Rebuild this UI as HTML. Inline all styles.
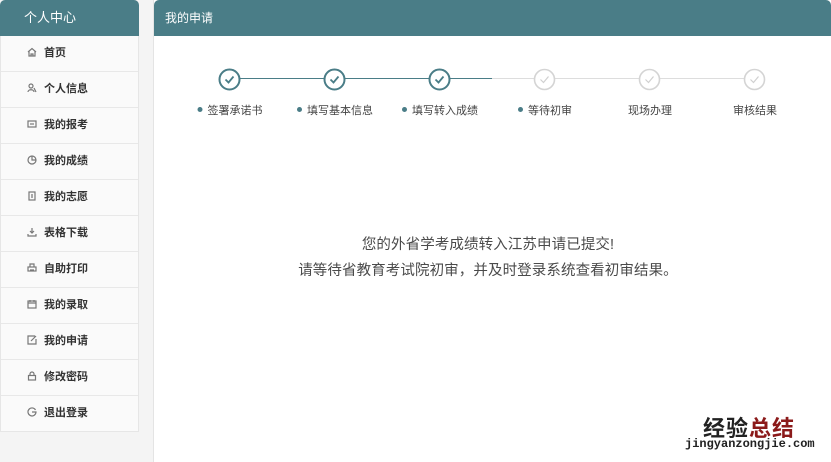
<!DOCTYPE html>
<html><head><meta charset="utf-8"><style>
*{margin:0;padding:0;box-sizing:border-box}
body{width:831px;height:462px;background:#f4f4f4;font-family:"Liberation Sans","Noto Sans CJK SC",sans-serif;position:relative;overflow:hidden}
.side{position:absolute;left:0;top:0;width:139px;height:432px;background:#fafafa;border:1px solid #e6e6e6;border-top:none;border-radius:6px 6px 0 0}
.hd{height:36px;background:#4a7d87;color:#fff;font-size:13px;line-height:36px;border-radius:5px 5px 0 0}
.side .hd{padding-left:24px;margin:0 -1px}
.it{height:36px;border-bottom:1px solid #e8e8e8;font-size:11px;color:#333;line-height:35px;padding-left:26px;font-weight:bold}
.it svg{width:10px;height:10px;vertical-align:-1px;margin-right:7px;fill:none;stroke:#777;stroke-width:1.2}
.main{position:absolute;left:153px;top:0;width:678px;height:462px;background:#fff;border-left:1px solid #e4e4e4}
.main .hd{padding-left:11px;font-size:12px}
.c{position:absolute;top:68px;width:23px;height:23px}
.ln{position:absolute;top:78px;height:1px}
.lb{position:absolute;top:102px;font-size:11px;color:#444;white-space:nowrap;transform:translateX(-50%)}
.lb i{display:inline-block;width:5px;height:5px;border-radius:50%;background:#4a7d87;margin-right:5px;vertical-align:2px}
.msg{position:absolute;left:0;width:678px;text-align:center;font-size:14.5px;color:#4a4a4a;letter-spacing:0.1px}
</style></head><body>
<div class="side"><div class="hd">个人中心</div>
<div class="it"><svg viewBox="0 0 10 10"><path d="M1 5L5 1.5 9 5M2 4.5V9H8V4.5M4 9V7H6V9"/></svg>首页</div>
<div class="it"><svg viewBox="0 0 10 10"><circle cx="4" cy="3" r="2"/><path d="M1 9C1 6 7 6 7 9M7 5L9 9"/></svg>个人信息</div>
<div class="it"><svg viewBox="0 0 10 10"><rect x="1" y="2" width="8" height="6"/><path d="M3 5H7"/></svg>我的报考</div>
<div class="it"><svg viewBox="0 0 10 10"><circle cx="5" cy="5" r="4"/><path d="M5 1V5H9"/></svg>我的成绩</div>
<div class="it"><svg viewBox="0 0 10 10"><rect x="2" y="1" width="6" height="8"/><path d="M4 4H6M4 6H6"/></svg>我的志愿</div>
<div class="it"><svg viewBox="0 0 10 10"><path d="M5 1V6M3 4L5 6 7 4M1 7V9H9V7"/></svg>表格下载</div>
<div class="it"><svg viewBox="0 0 10 10"><rect x="1" y="4" width="8" height="4"/><path d="M3 4V1H7V4M3 7H7"/></svg>自助打印</div>
<div class="it"><svg viewBox="0 0 10 10"><rect x="1" y="2" width="8" height="7"/><path d="M1 4H9M3 1V3M7 1V3"/></svg>我的录取</div>
<div class="it"><svg viewBox="0 0 10 10"><path d="M8 1H1V9H9V4M4 6L9 1"/></svg>我的申请</div>
<div class="it"><svg viewBox="0 0 10 10"><rect x="1.5" y="4.5" width="7" height="4.5"/><path d="M3 4.5V3A2 2 0 0 1 7 3V4.5"/></svg>修改密码</div>
<div class="it" style="border-bottom:none"><svg viewBox="0 0 10 10"><path d="M8.5 3A4 4 0 1 0 9 5H5"/></svg>退出登录</div>
</div>
<div class="main"><div class="hd">我的申请</div>
<div class="ln" style="left:76px;width:262px;background:#4a7d87"></div>
<div class="ln" style="left:338px;width:263px;background:#ddd"></div>
<svg class="c" style="left:64px" viewBox="0 0 23 23"><circle cx="11.5" cy="11.5" r="10" fill="#fff" stroke="#4a7d87" stroke-width="2"/><path d="M7.5 11.5L10.5 14.5 15.5 8.5" fill="none" stroke="#4a7d87" stroke-width="1.8"/></svg>
<svg class="c" style="left:169px" viewBox="0 0 23 23"><circle cx="11.5" cy="11.5" r="10" fill="#fff" stroke="#4a7d87" stroke-width="2"/><path d="M7.5 11.5L10.5 14.5 15.5 8.5" fill="none" stroke="#4a7d87" stroke-width="1.8"/></svg>
<svg class="c" style="left:274px" viewBox="0 0 23 23"><circle cx="11.5" cy="11.5" r="10" fill="#fff" stroke="#4a7d87" stroke-width="2"/><path d="M7.5 11.5L10.5 14.5 15.5 8.5" fill="none" stroke="#4a7d87" stroke-width="1.8"/></svg>
<svg class="c" style="left:379px" viewBox="0 0 23 23"><circle cx="11.5" cy="11.5" r="10" fill="#fff" stroke="#d4d4d4" stroke-width="1.6"/><path d="M7.5 11.5L10.5 14.5 15.5 8.5" fill="none" stroke="#d0d0d0" stroke-width="1.2"/></svg>
<svg class="c" style="left:484px" viewBox="0 0 23 23"><circle cx="11.5" cy="11.5" r="10" fill="#fff" stroke="#d4d4d4" stroke-width="1.6"/><path d="M7.5 11.5L10.5 14.5 15.5 8.5" fill="none" stroke="#d0d0d0" stroke-width="1.2"/></svg>
<svg class="c" style="left:589px" viewBox="0 0 23 23"><circle cx="11.5" cy="11.5" r="10" fill="#fff" stroke="#d4d4d4" stroke-width="1.6"/><path d="M7.5 11.5L10.5 14.5 15.5 8.5" fill="none" stroke="#d0d0d0" stroke-width="1.2"/></svg>
<div class="lb" style="left:76px"><i></i>签署承诺书</div>
<div class="lb" style="left:181px"><i></i>填写基本信息</div>
<div class="lb" style="left:286px"><i></i>填写转入成绩</div>
<div class="lb" style="left:391px"><i></i>等待初审</div>
<div class="lb" style="left:496px">现场办理</div>
<div class="lb" style="left:601px">审核结果</div>
<div class="msg" style="top:233px;left:-5px">您的外省学考成绩转入江苏申请已提交!</div>
<div class="msg" style="top:259px;left:-5px">请等待省教育考试院初审，并及时登录系统查看初审结果。</div>
<div style="position:absolute;left:549px;top:411px;font-size:22px;font-weight:bold;letter-spacing:1px"><span style="color:#222">经验</span><span style="color:#8b1a1a">总结</span></div>
<div style="position:absolute;left:531px;top:437px;font-size:12px;color:#222;font-family:'Liberation Mono',monospace;font-weight:bold">jingyanzongjie.com</div>
</div>
</body></html>
